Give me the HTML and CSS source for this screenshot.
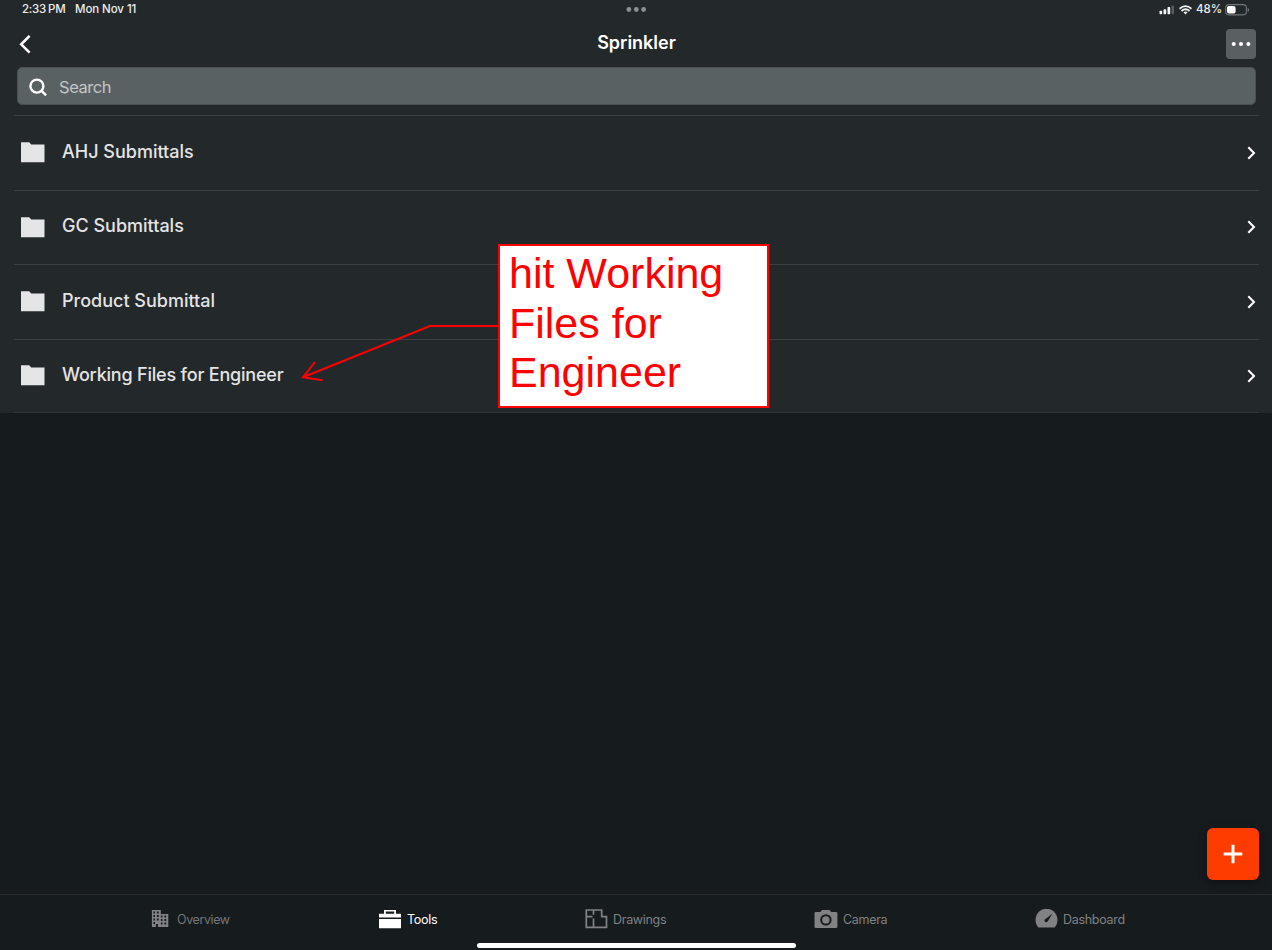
FILE: index.html
```html
<!DOCTYPE html>
<html lang="en">
<head>
<meta charset="utf-8">
<title>Sprinkler</title>
<link rel="stylesheet" href="styles.css">
</head>
<body>
<div class="app">
  <header class="top">
    <div class="status">
      <span class="time">2:33<i class="thin"></i>PM</span>
      <span class="date">Mon Nov 11</span>
      <svg class="multitask" width="20" height="6" viewBox="0 0 20 6"><circle cx="2.900" cy="2.500" r="2.400"/><circle cx="10.300" cy="2.500" r="2.400"/><circle cx="17.600" cy="2.500" r="2.400"/></svg>
      <div class="indicators">
        <svg width="17" height="10" viewBox="0 0 17 10"><g fill="#f2f3f3"><rect x=".5" y="5.800" width="2.700" height="3.500" rx=".7"/><rect x="4.500" y="4.300" width="2.700" height="5" rx=".7"/><rect x="8.500" y="2" width="2.700" height="7.300" rx=".7"/></g><rect x="12.600" y=".4" width="2.300" height="8.900" rx=".7" fill="#5b6163"/></svg>
        <svg class="wifi" width="13" height="10" viewBox="0 0 13 10"><g fill="none" stroke="#f2f3f3" stroke-width="1.800"><path d="M.5 3.700Q6.500-1.500 12.500 3.700"/><path d="M2.500 6Q6.500 2.600 10.500 6"/></g><path d="M6.500 9.400L4.500 7.300Q6.500 5.900 8.500 7.300Z" fill="#f2f3f3"/></svg>
        <span class="percent">48%</span>
        <svg class="battery" width="25" height="12" viewBox="0 0 25 12"><rect x=".7" y=".6" width="20.700" height="10.300" rx="3.300" fill="none" stroke="#717678" stroke-width="1.100"/><rect x="2" y="1.900" width="8.600" height="7.700" rx="2" fill="#fff"/><path d="M22.700 4q1.500.4 1.500 1.900t-1.500 1.900z" fill="#717678"/></svg>
      </div>
    </div>
    <div class="nav">
      <svg width="14" height="20" viewBox="0 0 14 20"><path d="M11.600 1.900L3.200 10.300l8.400 8.400" fill="none" stroke="#fff" stroke-width="2.600"/></svg>
      <h1 class="title"><span>Sprinkler</span></h1>
      <button class="more"><svg width="20" height="6" viewBox="0 0 20 6"><g fill="#fff"><circle cx="2.700" cy="3" r="2"/><circle cx="10" cy="3" r="2"/><circle cx="17.400" cy="3" r="2"/></g></svg></button>
    </div>
    <div class="search">
      <svg width="20" height="20" viewBox="0 0 20 20"><g fill="none" stroke="#fff" stroke-width="2.400"><circle cx="8.900" cy="9.100" r="6.500"/><path d="M13.400 13.600l4.700 4.700"/></g></svg>
      <span class="placeholder">Search</span>
    </div>
  </header>
  <main class="list">
    <div class="row">
      <svg class="folder" width="24" height="21" viewBox="0 0 24 21"><path d="M0 .3h8.200l2 2.200h13.300v17.800H0z"/></svg>
      <span class="name n1">AHJ Submittals</span>
      <svg class="chevron" width="9" height="14" viewBox="0 0 9 14"><path d="M1.300 1.300L7 7l-5.700 5.700"/></svg>
    </div>
    <div class="row">
      <svg class="folder" width="24" height="21" viewBox="0 0 24 21"><path d="M0 .3h8.200l2 2.200h13.300v17.800H0z"/></svg>
      <span class="name n2">GC Submittals</span>
      <svg class="chevron" width="9" height="14" viewBox="0 0 9 14"><path d="M1.300 1.300L7 7l-5.700 5.700"/></svg>
    </div>
    <div class="row">
      <svg class="folder" width="24" height="21" viewBox="0 0 24 21"><path d="M0 .3h8.200l2 2.200h13.300v17.800H0z"/></svg>
      <span class="name n3">Product Submittal</span>
      <svg class="chevron" width="9" height="14" viewBox="0 0 9 14"><path d="M1.300 1.300L7 7l-5.700 5.700"/></svg>
    </div>
    <div class="row">
      <svg class="folder" width="24" height="21" viewBox="0 0 24 21"><path d="M0 .3h8.200l2 2.200h13.300v17.800H0z"/></svg>
      <span class="name n4">Working Files for Engineer</span>
      <svg class="chevron" width="9" height="14" viewBox="0 0 9 14"><path d="M1.300 1.300L7 7l-5.700 5.700"/></svg>
    </div>
  </main>
  <div class="empty"></div>
  <nav class="tabs">
    <div class="tab overview">
      <svg width="18" height="18" viewBox="0 0 18 18"><path fill="#808284" fill-rule="evenodd" d="M.9.100h8.900v4h7.500v13H6.900v-3h-2v3h-4zM2.400 1.600v1.800h1.600V1.600zm3.500 0v1.800h1.800V1.600zM2.400 5.100v1.800h1.600V5.100zm3.500 0v1.800h1.800V5.100zM2.400 8.600v1.800h1.600V8.600zm3.500 0v1.800h1.800V8.600zM2.400 12.100v1.800h1.600v-1.800zM9.900 5.600v1.800h1.600V5.600zm3.500 0v1.800h1.800V5.600zM9.900 9.100v1.800h1.600V9.100zm3.500 0v1.800h1.800V9.100zM9.900 12.600v1.800h1.600v-1.800zm3.500 0v1.800h1.800v-1.800z"/></svg>
      <span>Overview</span>
    </div>
    <div class="tab tools">
      <svg width="22" height="19" viewBox="0 0 22 19"><path fill="#fff" fill-rule="evenodd" d="M5 0h12v3.800h5v3.700H0V3.800h5zM6.800 1.500v2.300h8.400V1.500zM0 9h22v9.200H0z"/></svg>
      <span>Tools</span>
    </div>
    <div class="tab drawings">
      <svg width="23" height="20" viewBox="0 0 23 20"><path fill="none" stroke="#808284" stroke-width="1.700" d="M1.300 1h15.400v6.600h4.800v10.700H1.300zM8.500 1v4.700M1 7.600h6.500M8.500 9.500v9"/></svg>
      <span>Drawings</span>
    </div>
    <div class="tab camera">
      <svg width="24" height="19" viewBox="0 0 24 19"><path fill="#808284" d="M1.500 2.100h5L8 .1h7.600l1.500 2h5q1.300 0 1.300 1.300v13.300q0 1.300-1.300 1.300H1.800Q.5 18 .5 16.700V3.400Q.5 2.100 1.500 2.100z"/><circle cx="11.900" cy="9.900" r="4.700" fill="#808284" stroke="#171b1d" stroke-width="2"/></svg>
      <span>Camera</span>
    </div>
    <div class="tab dashboard">
      <svg width="23" height="20" viewBox="0 0 23 20"><path fill="#808284" d="M3.400 18.400C-2.800 11.500 1.600-.2 11.500-.2s14.200 11.700 8.100 18.600z"/><path fill="#171b1d" d="M17.300 4.700L9.900 10.500q-.9 1.500.2 2.400 1.400.9 2.500-.4z"/></svg>
      <span>Dashboard</span>
    </div>
  </nav>
  <button class="add"><svg width="20" height="20" viewBox="0 0 20 20"><path d="M10 .7v18.600M.7 10h18.600" stroke="#fff" stroke-width="3"/></svg></button>
  <div class="home"></div>
  <svg class="arrow" width="200" height="60" viewBox="0 0 200 60"><path d="M199 6H131L4 57.300M16 42L4 57.300l19.500 2.900" fill="none" stroke="#f00" stroke-width="2"/></svg>
  <div class="note">hit Working Files for Engineer</div>
</div>
</body>
</html>
```
FILE: styles.css
```css
* { box-sizing: border-box; }
body { margin: 0; background: #171b1d; }
button { border: 0; padding: 0; display: flex; align-items: center; justify-content: center; }
svg { display: block; flex: none; }
.app { position: relative; width: 1272px; height: 950px; overflow: hidden; display: flex; flex-direction: column; font-family: Inter, sans-serif; color: #fff; background: #161b1d; }
.top { height: 115px; background: #23282a; flex: none; }
.status { height: 19px; display: grid; grid-template-columns: 53px 551px 20px 1fr; padding: 0 22px; align-items: center; font-size: 11.5px; line-height: 19px; font-weight: 500; color: #eceded; white-space: nowrap; }
.time { letter-spacing: -.25px; }
.date { letter-spacing: -.08px; }
.thin { display: inline-block; width: 2px; }
.multitask { fill: #8c9092; }
.indicators { display: flex; align-items: center; justify-content: flex-end; }
.wifi { margin-left: 3px; }
.percent { width: 26px; margin-left: 4px; }
.battery { margin-left: 3px; }
.nav { height: 48px; display: grid; grid-template-columns: 30px 1fr 30px; align-items: center; padding: 1px 16px 0 17px; }
.nav > svg { margin-left: 1px; }
.title { margin: 0; font-size: 18px; line-height: 24px; font-weight: 600; text-align: center; padding-bottom: 1px; }
.more { width: 30px; height: 30px; border-radius: 4px; background: #5a6062; }
.search { margin: 0 16px 0 17px; height: 38px; border: 1px solid #495052; border-radius: 5px; background: #5a6163; display: flex; align-items: center; padding: 1px 0 0 10px; gap: 11px; font-size: 17px; line-height: 22px; color: #c3c6c7; }
.placeholder { letter-spacing: -.75px; }
.search .placeholder { font-size: 16.500px; letter-spacing: -.45px; }
.list { height: 298px; flex: none; background: #23282a; padding: 0 13px 0 14px; }
.row { height: 74.500px; border-top: 1px solid #3b4042; display: flex; align-items: center; padding: 0 3px 0 7px; }
.row:last-child { border-bottom: 1px solid #303537; }
.folder { fill: #e4e5e7; }
.name { margin-left: 17px; flex: 1; font-size: 18px; line-height: 24px; font-weight: 500; color: #e3e4e5; padding-bottom: 2px; white-space: nowrap; }
.n4 { letter-spacing: -.2px; padding-bottom: 1px; }
.n3 { padding-bottom: 1px; }
.chevron { fill: none; stroke: #fff; stroke-width: 2; }
.empty { flex: 1; }
.tabs { height: 56px; border-top: 1px solid #292b2e; display: flex; align-items: flex-start; justify-content: space-between; padding: 12px 148px 0 151px; font-size: 12.500px; line-height: 24px; color: #808284; }
.tab { display: flex; align-items: center; height: 24px; white-space: nowrap; letter-spacing: -.3px; }
.tab span { padding-top: 1px; }
.tab.overview { width: 78px; gap: 8px; letter-spacing: -.4px; color: #747678; }
.tab.tools { width: 57px; gap: 6px; color: #fff; margin-left: 1px; }
.drawings { width: 80px; gap: 5px; }
.camera { width: 72px; gap: 5px; }
.dashboard { width: 89px; gap: 5px; }
.add { position: absolute; left: 1207px; top: 828px; width: 52px; height: 52px; border-radius: 6px; background: #ff3c00; box-shadow: 0 3px 8px rgba(0,0,0,.35); }
.home { position: absolute; left: 477px; top: 943px; width: 319px; height: 5px; border-radius: 3px; background: #fff; }
.arrow { position: absolute; left: 299px; top: 320px; overflow: visible; }
.note { position: absolute; left: 498px; top: 244px; width: 271px; height: 164px; border: 2px solid #f00; background: #fff; color: #f00; font-family: "Liberation Sans", sans-serif; font-size: 43px; line-height: 49.700px; padding: 3px 20px 0 9px; }
```
